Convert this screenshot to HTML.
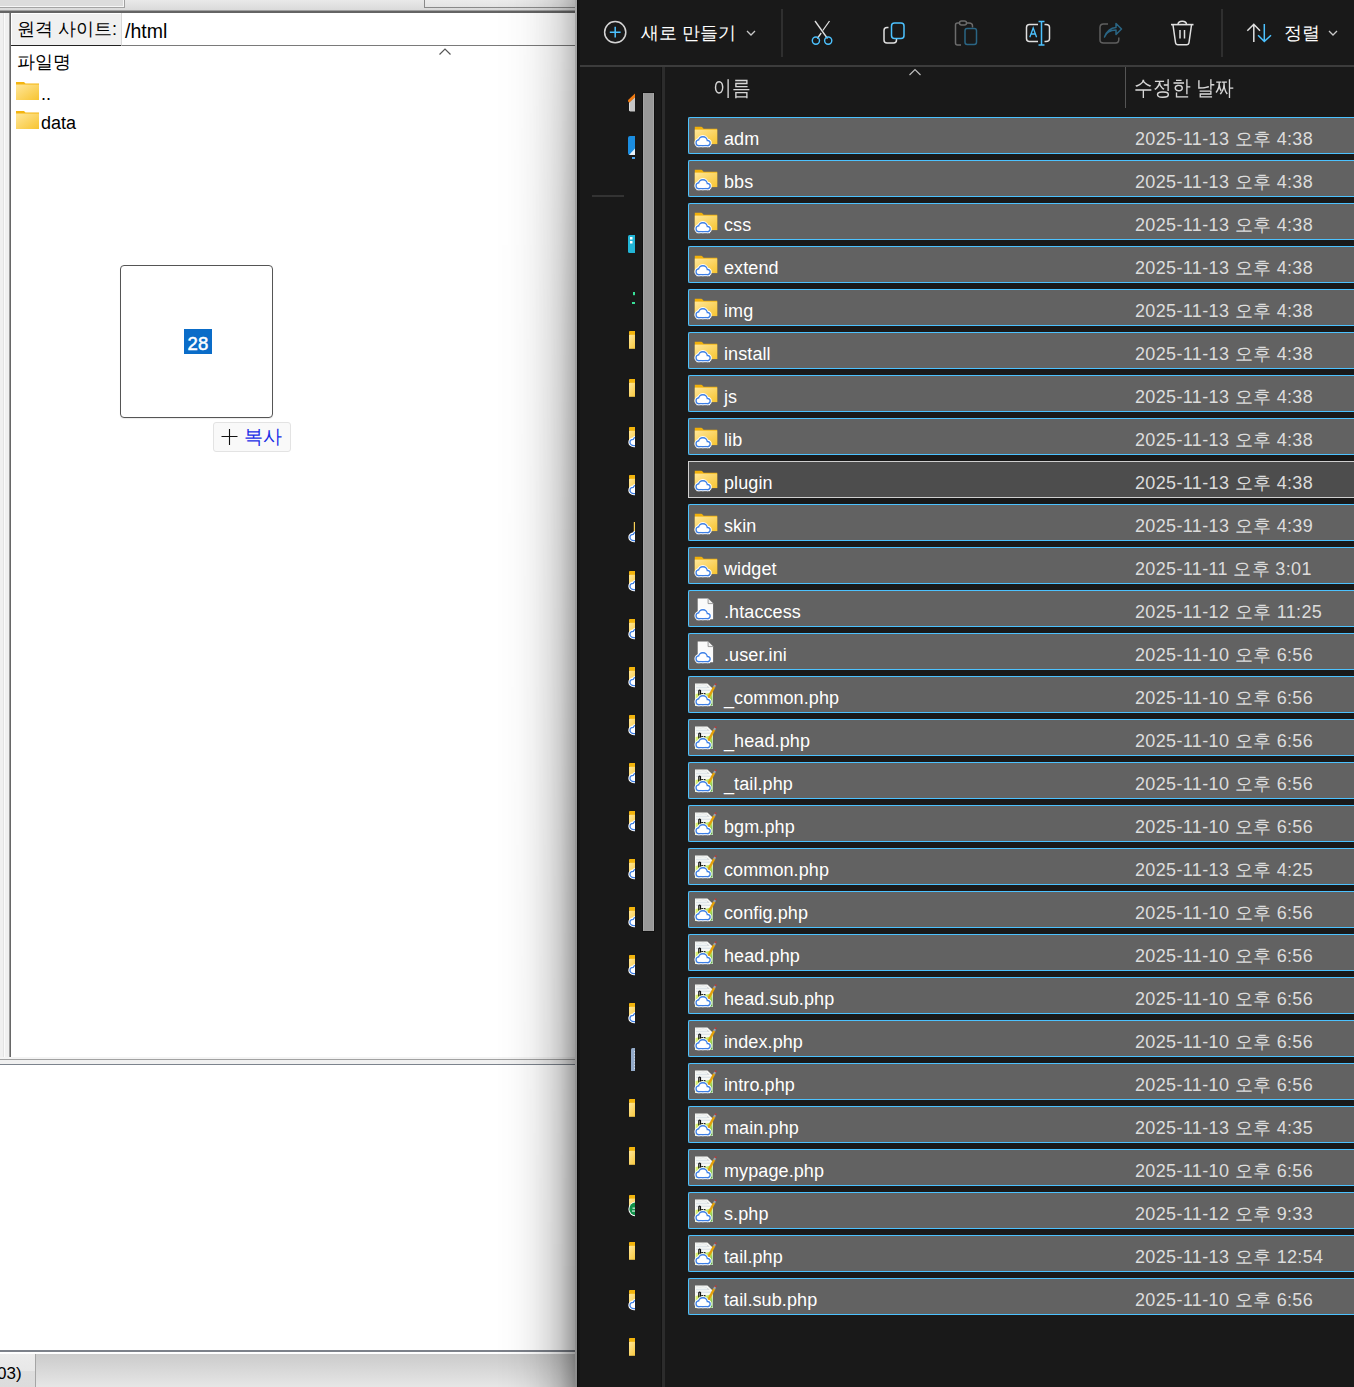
<!DOCTYPE html>
<html><head><meta charset="utf-8">
<style>
*{margin:0;padding:0;box-sizing:border-box}
html,body{width:1354px;height:1387px;overflow:hidden;background:#fff}
body{position:relative;font-family:"Liberation Sans",sans-serif}
.a{position:absolute}
/* ---------- left (FileZilla) ---------- */
#fz{position:absolute;left:0;top:0;width:577px;height:1387px;background:#f0f0f0;overflow:hidden}
.fzt{font-size:18px;color:#000;white-space:nowrap;line-height:1}
#shadow{position:absolute;left:495px;top:0;width:80px;height:1387px;background:linear-gradient(to right,rgba(0,0,0,0) 0%,rgba(0,0,0,0.01) 18.75%,rgba(0,0,0,0.027) 31.25%,rgba(0,0,0,0.05) 43.75%,rgba(0,0,0,0.09) 56.25%,rgba(0,0,0,0.14) 68.75%,rgba(0,0,0,0.215) 81.25%,rgba(0,0,0,0.33) 93.75%,rgba(0,0,0,0.40) 100%);-webkit-mask-image:linear-gradient(to bottom,rgba(0,0,0,0.62) 0%,rgba(0,0,0,0.78) 21.6%,rgba(0,0,0,0.93) 64.9%,#000 93.7%);mask-image:linear-gradient(to bottom,rgba(0,0,0,0.62) 0%,rgba(0,0,0,0.78) 21.6%,rgba(0,0,0,0.93) 64.9%,#000 93.7%)}
/* ---------- right (Explorer) ---------- */
#ex{position:absolute;left:577px;top:0;width:777px;height:1387px;background:#191919;overflow:hidden}
.ext{color:#fff;font-size:18px;white-space:nowrap;line-height:1;position:absolute}
.row{position:absolute;left:111px;width:700px;height:37px;background:#626262;border:1px solid #4cc2ff;border-right:none;border-radius:2px 0 0 2px}
.row.hov{background:#4d4d4d;border-color:#cfcfcf;border-radius:0}
.row .ic{position:absolute;left:5px;top:7px;overflow:visible}
.row .nm{position:absolute;left:35px;top:3px;line-height:37px;font-size:18px;color:#fff;white-space:nowrap;letter-spacing:0.1px}
.row .dt{position:absolute;left:446px;top:3px;line-height:37px;font-size:18px;color:#dcdcdc;letter-spacing:0.35px;white-space:nowrap}
.nv{position:absolute;left:50px;margin-top:-67px}
</style></head><body>

<svg width="0" height="0" style="position:absolute">
<defs>
 <linearGradient id="gfold" x1="0" y1="0" x2="1" y2="1">
  <stop offset="0" stop-color="#ffe79a"/><stop offset="1" stop-color="#f7c431"/>
 </linearGradient>
 <g id="cloudshape">
  <circle cx="8.9" cy="16.2" r="3.8"/>
  <circle cx="4.9" cy="17.7" r="2.2"/>
  <circle cx="13.7" cy="18.1" r="1.8"/>
  <rect x="4.9" y="16.5" width="8.8" height="3.4"/>
 </g>
 <g id="cloud">
  <use href="#cloudshape" fill="#fff" stroke="#fff" stroke-width="4.6" stroke-opacity="0.95"/>
  <use href="#cloudshape" fill="#3c7fe6" stroke="#3c7fe6" stroke-width="2.6"/>
  <use href="#cloudshape" fill="#fff" stroke="none"/>
 </g>
 <g id="ifold">
  <path d="M0.8 1.8 H7.3 Q7.9 1.8 8.3 2.3 L9.6 3.8 H23.2 V19.1 H0.8 Z" fill="#f1b00a"/>
  <rect x="0.8" y="4.6" width="22.4" height="14.5" fill="url(#gfold)"/>
  <use href="#cloud"/>
 </g>
 <g id="ifile">
  <path d="M3.7 0.6 H14.1 L19.1 5.6 V21.2 H3.7 Z" fill="#fafafa"/>
  <path d="M14.1 0.8 V5.6 H19" fill="#f0f0f0" stroke="#777" stroke-width="0.7"/>
  <use href="#cloud"/>
 </g>
 <linearGradient id="gphp" x1="0" y1="0" x2="1" y2="1">
  <stop offset="0" stop-color="#e6f77a"/><stop offset="0.6" stop-color="#b6df5a"/><stop offset="1" stop-color="#3f9d2c"/>
 </linearGradient>
 <g id="iphp">
  <path d="M1 -0.4 H13.4 L18.9 4.8 V22 H1 Z" fill="#f8f9f6"/>
  <path d="M1.5 1 Q3 0.4 4.5 1 T7.5 1 T10.5 1 T13 1" fill="none" stroke="#d8dcdf" stroke-width="0.7"/>
  <path d="M13.2 1.7 L15.7 3.8 H13.2 Z" fill="#c9cdd2"/>
  <rect x="2" y="2.7" width="11" height="1.6" fill="#dfe6ea"/>
  <rect x="2" y="5.6" width="15.5" height="1.4" fill="#dfe6ea"/>
  <path d="M1.6 10 Q6 8.5 11 10 L18.4 8 V21.5 H1.6 Z" fill="url(#gphp)"/>
  <path d="M4.8 11.5 V6.6 Q5.6 5.6 6.5 6.6 V11" fill="none" stroke="#111" stroke-width="1.2"/>
  <rect x="7.2" y="9.1" width="1.8" height="1.3" fill="#111"/><rect x="9.7" y="9.1" width="1.8" height="1.3" fill="#111"/>
  <circle cx="16.3" cy="20.2" r="0.8" fill="#138a1f"/>
  <path d="M14 14.4 L20.3 2.6" stroke="#e3a00b" stroke-width="2.3"/>
  <path d="M20.1 3 L21.2 0.9" stroke="#9aa3ae" stroke-width="2.1"/>
  <circle cx="21.6" cy="0.2" r="1" fill="#b83a3a"/>
  <use href="#cloud"/>
 </g>
 <!-- nav slivers -->
 <g id="nhome"><path d="M2 10.5 L8.5 4.3 V19.5 H3 L2 18.5 Z" fill="#c6c6c6"/><path d="M2.6 10.8 V18.6" stroke="#dedede" stroke-width="1"/><path d="M1 8.8 Q1 8 1.6 7.5 L8.5 1 V4.8 L2.4 10.6 Q1 10.4 1 8.8 Z" fill="#f27a10"/></g>
 <g id="nblue"><rect x="1" y="0" width="10" height="19" rx="2" fill="#1b8de0"/><path d="M2 19 L9.5 11 V19 Z" fill="#e8f2fb"/><rect x="5" y="21" width="5" height="2" fill="#4aa0e8"/></g>
 <g id="ncyan"><rect x="1" y="0" width="10" height="18" rx="1.5" fill="#22b5d6"/><rect x="3" y="2" width="2.5" height="2.5" fill="#fff"/><rect x="3" y="6" width="2.5" height="2.5" fill="#fff"/></g>
 <g id="ngreen1"><rect x="6" y="0" width="2.5" height="3.2" fill="#38df98"/><rect x="5" y="10" width="3.5" height="2" fill="#38df98"/></g>
 <g id="nfold"><rect x="2" y="0" width="8" height="4" rx="0.8" fill="#f2b40c"/><rect x="2" y="3.8" width="8" height="14" fill="url(#gfold)"/></g>
 <g id="nfc"><rect x="2" y="0" width="8" height="4" rx="0.8" fill="#f2b40c"/><rect x="2" y="3.8" width="8" height="14" fill="url(#gfold)"/><path d="M9 18.6 H7 C4.5 18.6 3 17 3 15.2 C3 13.5 4.5 12.3 6.3 12.3 C6.6 11 7.3 10.4 9 10.2 Z" fill="#fff" stroke="#fff" stroke-width="3.4"/><path d="M9 18.6 H7 C4.5 18.6 3 17 3 15.2 C3 13.5 4.5 12.3 6.3 12.3 C6.6 11 7.3 10.4 9 10.2" fill="#fff" stroke="#3c7fe6" stroke-width="1.3"/></g>
 <g id="nfcn"><rect x="6.8" y="0" width="1.4" height="13" fill="#f7cf55"/><path d="M9 18.6 H7 C4.5 18.6 3 17 3 15.2 C3 13.5 4.5 12.3 6.3 12.3 C6.6 11 7.3 10.4 9 10.2 Z" fill="#fff" stroke="#fff" stroke-width="3.4"/><path d="M9 18.6 H7 C4.5 18.6 3 17 3 15.2 C3 13.5 4.5 12.3 6.3 12.3 C6.6 11 7.3 10.4 9 10.2" fill="#fff" stroke="#3c7fe6" stroke-width="1.3"/></g>
 <g id="nbg"><rect x="4" y="1" width="5" height="24" rx="1.5" fill="#94abc9"/><path d="M7.5 4 V22" stroke="#e8eef6" stroke-width="0.8" stroke-dasharray="1.2 1.6"/></g>
 <g id="ngrn"><rect x="2" y="1" width="8" height="4" rx="0.8" fill="#f2b40c"/><rect x="2" y="4.6" width="8" height="12" fill="url(#gfold)"/><circle cx="8.8" cy="14.9" r="7.4" fill="#fff"/><circle cx="8.8" cy="14.9" r="6.5" fill="#10924a"/><rect x="5.5" y="13.6" width="3" height="1.1" fill="#e8f5ec"/><rect x="5" y="16.5" width="3.5" height="1.1" fill="#e8f5ec"/></g>
</defs>
</svg>

<!-- ================= FileZilla ================= -->
<div id="fz">
 <!-- top strip -->
 <div class="a" style="left:0;top:0;width:577px;height:10px;background:linear-gradient(#e9e9e9,#dadada)"></div>
 <div class="a" style="left:0;top:0;width:125px;height:8px;background:#dcdcdc;border-right:1px solid #a0a0a0;border-bottom:1px solid #a4a4a4;box-shadow:inset -1px -1px 0 #f6f6f6"></div>
 <div class="a" style="left:424px;top:0;width:160px;height:8px;background:linear-gradient(#ececec,#e4e4e4);border-left:1px solid #8a8a8a;border-bottom:1px solid #8a8a8a"></div>
 <div class="a" style="left:0;top:10px;width:577px;height:2px;background:#a0a0a0"></div>
 <div class="a" style="left:0;top:11px;width:577px;height:2px;background:#646464"></div>
 <!-- left column -->
 <div class="a" style="left:0;top:13px;width:3px;height:1044px;background:#f0f0f0"></div>
 <div class="a" style="left:3px;top:13px;width:1px;height:1044px;background:#e3e3e3"></div>
 <div class="a" style="left:4px;top:13px;width:1px;height:1044px;background:#fbfbfb"></div>
 <div class="a" style="left:5px;top:13px;width:4px;height:1044px;background:#f0f0f0"></div>
 <div class="a" style="left:9px;top:13px;width:1px;height:1044px;background:#9a9a9a"></div>
 <div class="a" style="left:10px;top:13px;width:1px;height:1044px;background:#676767"></div>
 <!-- label + input -->
 <div class="a" style="left:11px;top:13px;width:110px;height:33px;background:#f0f0f0;border-bottom:1px solid #222;box-shadow:inset 1px 1px 0 #fff"></div>
 <div class="a fzt" style="left:17px;top:20px">원격 사이트:</div>
 <div class="a" style="left:121px;top:13px;width:456px;height:33px;background:#fff;border-left:1px solid #d8d8d8;border-bottom:1px solid #7a7a7a"></div>
 <div class="a fzt" style="left:125px;top:22px;font-size:19.5px">/html</div>
 <!-- list -->
 <div class="a" style="left:11px;top:46px;width:566px;height:1011px;background:#fff"></div>
 <div class="a fzt" style="left:17px;top:53px">파일명</div>
 <svg class="a" style="left:438px;top:47px" width="14" height="9" viewBox="0 0 14 9"><path d="M1.5 7.5 L7 2 L12.5 7.5" fill="none" stroke="#555" stroke-width="1.2"/></svg>
 <svg class="a" style="left:16px;top:82px" width="23" height="18" viewBox="0 0 23 18"><path d="M0 0 H8 L9.5 1.6 H23 V18 H0 Z" fill="#f4b510"/><rect x="0" y="2.5" width="23" height="15.5" fill="url(#gfold)"/></svg>
 <div class="a fzt" style="left:41px;top:85px">..</div>
 <svg class="a" style="left:16px;top:111px" width="23" height="18" viewBox="0 0 23 18"><path d="M0 0 H8 L9.5 1.6 H23 V18 H0 Z" fill="#f4b510"/><rect x="0" y="2.5" width="23" height="15.5" fill="url(#gfold)"/></svg>
 <div class="a fzt" style="left:41px;top:114px">data</div>
 <!-- drag box -->
 <div class="a" style="left:120px;top:265px;width:153px;height:153px;border:1.7px solid #555;border-radius:4px;background:#fff;box-shadow:0 1px 1px rgba(0,0,0,0.08)"></div>
 <div class="a" style="left:184px;top:329px;width:28px;height:25px;background:#0a6cc8;color:#fff;font-size:18.5px;font-weight:normal;-webkit-text-stroke:0.5px #fff;line-height:29px;text-align:center;letter-spacing:0.3px">28</div>
 <div class="a" style="left:213px;top:422px;width:78px;height:30px;background:#f9f9f9;border:1px solid #e3e3e3;border-radius:3px"></div>
 <svg class="a" style="left:221px;top:428px" width="18" height="18" viewBox="0 0 18 18"><path d="M8.5 1 V17 M0.5 8.5 H16.5" stroke="#111" stroke-width="1.1"/></svg>
 <div class="a fzt" style="left:244px;top:428px;color:#1a2ee6;font-size:18.5px">복사</div>
 <!-- bottom -->
 <div class="a" style="left:0;top:1057px;width:577px;height:2px;background:#f4f4f4"></div>
 <div class="a" style="left:0;top:1059px;width:577px;height:1px;background:#a2a2a2"></div>
 <div class="a" style="left:0;top:1060px;width:577px;height:4px;background:#f0f0f0"></div>
 <div class="a" style="left:0;top:1064px;width:577px;height:1px;background:#7c838d"></div>
 <div class="a" style="left:0;top:1065px;width:577px;height:285px;background:#fff"></div>
 <div class="a" style="left:0;top:1350px;width:577px;height:2px;background:#7c818a"></div>
 <div class="a" style="left:0;top:1352px;width:577px;height:2px;background:#fff"></div>
 <div class="a" style="left:0;top:1354px;width:577px;height:33px;background:linear-gradient(#cbcbcb,#e6e6e6)"></div>
 <div class="a" style="left:0;top:1354px;width:35px;height:33px;background:linear-gradient(#ececec 0,#e8e8e8 50%,#dedede 51%,#dcdcdc 100%)"></div>
 <div class="a" style="left:35px;top:1354px;width:1px;height:33px;background:#a5a5a5"></div>
 <div class="a fzt" style="left:-3px;top:1365px;font-size:17px">03)</div>
 <div id="shadow"></div>
 <div class="a" style="left:575px;top:0;width:2px;height:1387px;background:linear-gradient(#a4a4a4,#8c8c8c)"></div>
</div>

<!-- ================= Explorer ================= -->
<div id="ex">
 <!-- toolbar -->
 <svg class="a" style="left:25px;top:19px" width="28" height="28" viewBox="0 0 28 28">
  <circle cx="13.2" cy="13.2" r="10.6" fill="none" stroke="#d4d4d4" stroke-width="1.5"/>
  <path d="M13.2 7.8 V18.6 M7.8 13.2 H18.6" stroke="#4cc2ff" stroke-width="1.5"/>
 </svg>
 <div class="ext" style="left:64px;top:24px">새로 만들기</div>
 <svg class="a" style="left:168px;top:28px" width="12" height="10" viewBox="0 0 12 10"><path d="M2 3 L6 7 L10 3" fill="none" stroke="#c8c8c8" stroke-width="1.3"/></svg>
 <div class="a" style="left:204px;top:9px;width:2px;height:48px;background:#2f2f2f"></div>
 <!-- scissors -->
 <svg class="a" style="left:232px;top:18px" width="26" height="30" viewBox="0 0 26 30">
  <path d="M6 3 L18.5 20.5" stroke="#e0e0e0" stroke-width="1.3"/>
  <path d="M20.5 3 L13.8 12.5 M12.2 15 L8.3 20.5" stroke="#e0e0e0" stroke-width="1.3"/>
  <circle cx="6.9" cy="22.6" r="3.6" fill="none" stroke="#4cc2ff" stroke-width="1.4"/>
  <circle cx="19.2" cy="22.6" r="3.6" fill="none" stroke="#4cc2ff" stroke-width="1.4"/>
 </svg>
 <!-- copy -->
 <svg class="a" style="left:303px;top:18px" width="30" height="30" viewBox="0 0 30 30">
  <path d="M8.5 9.5 H7 Q4 9.5 4 12.5 V22 Q4 25 7 25 H13.5 Q16.5 25 16.5 22 V21" fill="none" stroke="#e0e0e0" stroke-width="1.5"/>
  <rect x="11.5" y="5" width="12.5" height="15.5" rx="3" fill="none" stroke="#4cc2ff" stroke-width="1.5"/>
 </svg>
 <!-- paste disabled -->
 <svg class="a" style="left:375px;top:18px" width="30" height="30" viewBox="0 0 30 30">
  <path d="M7.5 5 H5.5 Q3.5 5 3.5 7 V25 Q3.5 27 5.5 27 H9" fill="none" stroke="#6c6c6c" stroke-width="1.5"/>
  <path d="M14.5 5 H17 Q20.5 5 20.5 8 V9.5" fill="none" stroke="#6c6c6c" stroke-width="1.5"/>
  <rect x="7.5" y="3" width="7" height="4" rx="2" fill="none" stroke="#6c6c6c" stroke-width="1.5"/>
  <rect x="13" y="10.5" width="11.5" height="16" rx="2.2" fill="none" stroke="#2a6584" stroke-width="1.5"/>
 </svg>
 <!-- rename -->
 <svg class="a" style="left:446px;top:18px" width="30" height="30" viewBox="0 0 30 30">
  <path d="M15 6.5 H6.5 Q3.5 6.5 3.5 9.5 V20.5 Q3.5 23.5 6.5 23.5 H15" fill="none" stroke="#e0e0e0" stroke-width="1.5"/>
  <path d="M21.5 6.5 H23 Q26.5 6.5 26.5 9.5 V20.5 Q26.5 23.5 23 23.5 H21.5" fill="none" stroke="#e0e0e0" stroke-width="1.5"/>
  <path d="M18.5 3.5 V27 M15.5 3.5 H21.5 M15.5 27 H21.5" stroke="#4cc2ff" stroke-width="1.5"/>
  <path d="M6.8 19.3 L10.2 10 L13.6 19.3 M8.1 16 H12.3" fill="none" stroke="#4cc2ff" stroke-width="1.3"/>
 </svg>
 <!-- share disabled -->
 <svg class="a" style="left:519px;top:18px" width="30" height="30" viewBox="0 0 30 30">
  <path d="M12 6 H7.5 Q4 6 4 9.5 V22 Q4 25 7.5 25 H19.5 Q22.8 25 22.8 21.5 V19.5" fill="none" stroke="#5f5f5f" stroke-width="1.5"/>
  <path d="M8.5 19 Q11 12 20 12 V16.5 L25.5 11 L20 5.5 V9.5 Q12 10 8.5 19 Z" fill="none" stroke="#2a6584" stroke-width="1.5" stroke-linejoin="round"/>
 </svg>
 <!-- trash -->
 <svg class="a" style="left:591px;top:18px" width="30" height="30" viewBox="0 0 30 30">
  <path d="M3 6.6 H25.5" stroke="#e0e0e0" stroke-width="1.6"/>
  <path d="M10 6.5 Q10 3.2 14.2 3.2 Q18.5 3.2 18.5 6.5" fill="none" stroke="#e0e0e0" stroke-width="1.5"/>
  <path d="M5 7 L7.5 24.5 Q7.8 26.8 10 26.8 H18.5 Q20.7 26.8 21 24.5 L23.5 7" fill="none" stroke="#e0e0e0" stroke-width="1.5"/>
  <path d="M12 12 V20.5 M16.5 12 V20.5" stroke="#e0e0e0" stroke-width="1.5"/>
 </svg>
 <div class="a" style="left:644px;top:9px;width:2px;height:48px;background:#2f2f2f"></div>
 <!-- sort -->
 <svg class="a" style="left:667px;top:20px" width="30" height="26" viewBox="0 0 30 26">
  <path d="M9.8 4 V22 M3.3 10.8 L9.8 4.3 L16 10.8" fill="none" stroke="#e0e0e0" stroke-width="1.5"/>
  <path d="M20.3 4 V22 M14.1 15.2 L20.3 21.5 L27 15.2" fill="none" stroke="#4cc2ff" stroke-width="1.5"/>
 </svg>
 <div class="ext" style="left:707px;top:24px">정렬</div>
 <svg class="a" style="left:750px;top:28px" width="12" height="10" viewBox="0 0 12 10"><path d="M2 3 L6 7 L10 3" fill="none" stroke="#c8c8c8" stroke-width="1.3"/></svg>
 <!-- header line -->
 <div class="a" style="left:0;top:65px;width:777px;height:2px;background:#3c3c3c"></div>
 <div class="a" style="left:0;top:0;width:1px;height:1387px;background:#0b0b0b"></div><div class="a" style="left:1px;top:0;width:2px;height:1387px;background:#141414"></div>
 <!-- nav pane -->
 <div class="a" style="left:15px;top:195px;width:32px;height:2px;background:#333"></div>
<div class="a" style="left:0;top:67px;width:58px;height:1320px;overflow:hidden">
<svg class="nv" style="top:92px" width="10" height="24" viewBox="0 0 10 24"><use href="#nhome"/></svg>
<svg class="nv" style="top:136px" width="10" height="24" viewBox="0 0 10 24"><use href="#nblue"/></svg>
<svg class="nv" style="top:235px" width="10" height="24" viewBox="0 0 10 24"><use href="#ncyan"/></svg>
<svg class="nv" style="top:292px" width="10" height="24" viewBox="0 0 10 24"><use href="#ngreen1"/></svg>
<svg class="nv" style="top:331px" width="10" height="24" viewBox="0 0 10 24"><use href="#nfold"/></svg>
<svg class="nv" style="top:379px" width="10" height="24" viewBox="0 0 10 24"><use href="#nfold"/></svg>
<svg class="nv" style="top:427px" width="10" height="24" viewBox="0 0 10 24"><use href="#nfc"/></svg>
<svg class="nv" style="top:475px" width="10" height="24" viewBox="0 0 10 24"><use href="#nfc"/></svg>
<svg class="nv" style="top:522px" width="10" height="24" viewBox="0 0 10 24"><use href="#nfcn"/></svg>
<svg class="nv" style="top:571px" width="10" height="24" viewBox="0 0 10 24"><use href="#nfc"/></svg>
<svg class="nv" style="top:619px" width="10" height="24" viewBox="0 0 10 24"><use href="#nfc"/></svg>
<svg class="nv" style="top:667px" width="10" height="24" viewBox="0 0 10 24"><use href="#nfc"/></svg>
<svg class="nv" style="top:715px" width="10" height="24" viewBox="0 0 10 24"><use href="#nfc"/></svg>
<svg class="nv" style="top:763px" width="10" height="24" viewBox="0 0 10 24"><use href="#nfc"/></svg>
<svg class="nv" style="top:811px" width="10" height="24" viewBox="0 0 10 24"><use href="#nfc"/></svg>
<svg class="nv" style="top:859px" width="10" height="24" viewBox="0 0 10 24"><use href="#nfc"/></svg>
<svg class="nv" style="top:907px" width="10" height="24" viewBox="0 0 10 24"><use href="#nfc"/></svg>
<svg class="nv" style="top:955px" width="10" height="24" viewBox="0 0 10 24"><use href="#nfc"/></svg>
<svg class="nv" style="top:1003px" width="10" height="24" viewBox="0 0 10 24"><use href="#nfc"/></svg>
<svg class="nv" style="top:1047px" width="10" height="24" viewBox="0 0 10 24"><use href="#nbg"/></svg>
<svg class="nv" style="top:1099px" width="10" height="24" viewBox="0 0 10 24"><use href="#nfold"/></svg>
<svg class="nv" style="top:1147px" width="10" height="24" viewBox="0 0 10 24"><use href="#nfold"/></svg>
<svg class="nv" style="top:1194px" width="10" height="24" viewBox="0 0 10 24"><use href="#ngrn"/></svg>
<svg class="nv" style="top:1242px" width="10" height="24" viewBox="0 0 10 24"><use href="#nfold"/></svg>
<svg class="nv" style="top:1290px" width="10" height="24" viewBox="0 0 10 24"><use href="#nfc"/></svg>
<svg class="nv" style="top:1338px" width="10" height="24" viewBox="0 0 10 24"><use href="#nfold"/></svg>
</div>
 <div class="a" style="left:66px;top:93px;width:11px;height:838px;background:#999;box-shadow:0 0 0 1px #101010,inset 1px 0 0 #a6a6a6,inset -1px 0 0 #a6a6a6"></div>
 <div class="a" style="left:84px;top:67px;width:1px;height:1320px;background:#131313"></div><div class="a" style="left:85px;top:67px;width:3px;height:1320px;background:#2c2c2c"></div>
 <!-- column header -->
 <div class="ext" style="left:136px;top:80px;color:#d6d6d6;font-size:18.5px;transform:scaleY(1.12);transform-origin:0 17px">이름</div>
 <svg class="a" style="left:331px;top:67px" width="14" height="10" viewBox="0 0 14 10"><path d="M1.5 8 L7 2.5 L12.5 8" fill="none" stroke="#bdbdbd" stroke-width="1.2"/></svg>
 <div class="a" style="left:548px;top:67px;width:1px;height:41px;background:#555"></div>
 <div class="ext" style="left:557px;top:80px;color:#d6d6d6;font-size:18.5px;transform:scaleY(1.12);transform-origin:0 17px">수정한 날짜</div>
<div class="row" style="top:117px"><svg class="ic" width="26" height="26" viewBox="0 0 26 26"><use href="#ifold"/></svg><span class="nm">adm</span><span class="dt">2025-11-13 오후 4:38</span></div>
<div class="row" style="top:160px"><svg class="ic" width="26" height="26" viewBox="0 0 26 26"><use href="#ifold"/></svg><span class="nm">bbs</span><span class="dt">2025-11-13 오후 4:38</span></div>
<div class="row" style="top:203px"><svg class="ic" width="26" height="26" viewBox="0 0 26 26"><use href="#ifold"/></svg><span class="nm">css</span><span class="dt">2025-11-13 오후 4:38</span></div>
<div class="row" style="top:246px"><svg class="ic" width="26" height="26" viewBox="0 0 26 26"><use href="#ifold"/></svg><span class="nm">extend</span><span class="dt">2025-11-13 오후 4:38</span></div>
<div class="row" style="top:289px"><svg class="ic" width="26" height="26" viewBox="0 0 26 26"><use href="#ifold"/></svg><span class="nm">img</span><span class="dt">2025-11-13 오후 4:38</span></div>
<div class="row" style="top:332px"><svg class="ic" width="26" height="26" viewBox="0 0 26 26"><use href="#ifold"/></svg><span class="nm">install</span><span class="dt">2025-11-13 오후 4:38</span></div>
<div class="row" style="top:375px"><svg class="ic" width="26" height="26" viewBox="0 0 26 26"><use href="#ifold"/></svg><span class="nm">js</span><span class="dt">2025-11-13 오후 4:38</span></div>
<div class="row" style="top:418px"><svg class="ic" width="26" height="26" viewBox="0 0 26 26"><use href="#ifold"/></svg><span class="nm">lib</span><span class="dt">2025-11-13 오후 4:38</span></div>
<div class="row hov" style="top:461px"><svg class="ic" width="26" height="26" viewBox="0 0 26 26"><use href="#ifold"/></svg><span class="nm">plugin</span><span class="dt">2025-11-13 오후 4:38</span></div>
<div class="row" style="top:504px"><svg class="ic" width="26" height="26" viewBox="0 0 26 26"><use href="#ifold"/></svg><span class="nm">skin</span><span class="dt">2025-11-13 오후 4:39</span></div>
<div class="row" style="top:547px"><svg class="ic" width="26" height="26" viewBox="0 0 26 26"><use href="#ifold"/></svg><span class="nm">widget</span><span class="dt">2025-11-11 오후 3:01</span></div>
<div class="row" style="top:590px"><svg class="ic" width="26" height="26" viewBox="0 0 26 26"><use href="#ifile"/></svg><span class="nm">.htaccess</span><span class="dt">2025-11-12 오후 11:25</span></div>
<div class="row" style="top:633px"><svg class="ic" width="26" height="26" viewBox="0 0 26 26"><use href="#ifile"/></svg><span class="nm">.user.ini</span><span class="dt">2025-11-10 오후 6:56</span></div>
<div class="row" style="top:676px"><svg class="ic" width="26" height="26" viewBox="0 0 26 26"><use href="#iphp"/></svg><span class="nm">_common.php</span><span class="dt">2025-11-10 오후 6:56</span></div>
<div class="row" style="top:719px"><svg class="ic" width="26" height="26" viewBox="0 0 26 26"><use href="#iphp"/></svg><span class="nm">_head.php</span><span class="dt">2025-11-10 오후 6:56</span></div>
<div class="row" style="top:762px"><svg class="ic" width="26" height="26" viewBox="0 0 26 26"><use href="#iphp"/></svg><span class="nm">_tail.php</span><span class="dt">2025-11-10 오후 6:56</span></div>
<div class="row" style="top:805px"><svg class="ic" width="26" height="26" viewBox="0 0 26 26"><use href="#iphp"/></svg><span class="nm">bgm.php</span><span class="dt">2025-11-10 오후 6:56</span></div>
<div class="row" style="top:848px"><svg class="ic" width="26" height="26" viewBox="0 0 26 26"><use href="#iphp"/></svg><span class="nm">common.php</span><span class="dt">2025-11-13 오후 4:25</span></div>
<div class="row" style="top:891px"><svg class="ic" width="26" height="26" viewBox="0 0 26 26"><use href="#iphp"/></svg><span class="nm">config.php</span><span class="dt">2025-11-10 오후 6:56</span></div>
<div class="row" style="top:934px"><svg class="ic" width="26" height="26" viewBox="0 0 26 26"><use href="#iphp"/></svg><span class="nm">head.php</span><span class="dt">2025-11-10 오후 6:56</span></div>
<div class="row" style="top:977px"><svg class="ic" width="26" height="26" viewBox="0 0 26 26"><use href="#iphp"/></svg><span class="nm">head.sub.php</span><span class="dt">2025-11-10 오후 6:56</span></div>
<div class="row" style="top:1020px"><svg class="ic" width="26" height="26" viewBox="0 0 26 26"><use href="#iphp"/></svg><span class="nm">index.php</span><span class="dt">2025-11-10 오후 6:56</span></div>
<div class="row" style="top:1063px"><svg class="ic" width="26" height="26" viewBox="0 0 26 26"><use href="#iphp"/></svg><span class="nm">intro.php</span><span class="dt">2025-11-10 오후 6:56</span></div>
<div class="row" style="top:1106px"><svg class="ic" width="26" height="26" viewBox="0 0 26 26"><use href="#iphp"/></svg><span class="nm">main.php</span><span class="dt">2025-11-13 오후 4:35</span></div>
<div class="row" style="top:1149px"><svg class="ic" width="26" height="26" viewBox="0 0 26 26"><use href="#iphp"/></svg><span class="nm">mypage.php</span><span class="dt">2025-11-10 오후 6:56</span></div>
<div class="row" style="top:1192px"><svg class="ic" width="26" height="26" viewBox="0 0 26 26"><use href="#iphp"/></svg><span class="nm">s.php</span><span class="dt">2025-11-12 오후 9:33</span></div>
<div class="row" style="top:1235px"><svg class="ic" width="26" height="26" viewBox="0 0 26 26"><use href="#iphp"/></svg><span class="nm">tail.php</span><span class="dt">2025-11-13 오후 12:54</span></div>
<div class="row" style="top:1278px"><svg class="ic" width="26" height="26" viewBox="0 0 26 26"><use href="#iphp"/></svg><span class="nm">tail.sub.php</span><span class="dt">2025-11-10 오후 6:56</span></div>
</div>
</body></html>
